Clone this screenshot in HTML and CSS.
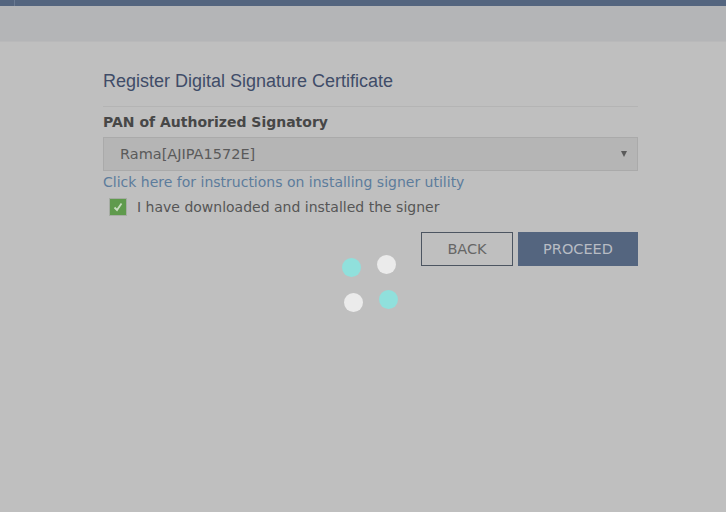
FILE: index.html
```html
<!DOCTYPE html>
<html lang="en">
<head>
    <meta charset="UTF-8">
    <title>Register Digital Signature Certificate</title>
    <link rel="stylesheet" href="styles.css">
</head>
<body>
    <div class="topbar"><span class="topbar-mark"></span></div>
    <div class="subbar"></div>

    <main class="content">
        <h3 class="page-title">Register Digital Signature Certificate</h3>
        <hr class="divider">

        <label class="field-label" for="pan">PAN of Authorized Signatory</label>
        <div class="select-box" id="pan">
            <span>Rama[AJIPA1572E]</span>
            <span class="caret"></span>
        </div>
        <a href="#" class="help-link">Click here for instructions on installing signer utility</a>

        <div class="check-row">
            <span class="checkbox">
                <svg width="12" height="12" viewBox="0 0 12 12"><path d="M2.5 6.5 L5 9 L9.5 2.5" fill="none" stroke="#c8dcc0" stroke-width="1.8"/></svg>
            </span>
            <span>I have downloaded and installed the signer</span>
        </div>

        <div class="actions">
            <button class="btn btn-outline">BACK</button>
            <button class="btn btn-primary">PROCEED</button>
        </div>
    </main>

    <!-- loading spinner over the page -->
    <div class="spinner">
        <span class="dot dot-teal d1"></span>
        <span class="dot dot-white d2"></span>
        <span class="dot dot-white d3"></span>
        <span class="dot dot-teal d4"></span>
    </div>
</body>
</html>
```

FILE: styles.css
```css
body {
    margin: 0;
    background: #bfbfbf;
    font-family: "DejaVu Sans", Verdana, sans-serif;
    color: #555;
    height: 512px;
    overflow: hidden;
    position: relative;
}

.topbar {
    height: 6px;
    background: #54657f;
    position: relative;
}

.topbar-mark {
    position: absolute;
    left: 14px;
    top: 0;
    width: 1px;
    height: 6px;
    background: #6a7a92;
}

.subbar {
    height: 35px;
    background: #b4b5b7;
    border-bottom: 1px solid #b9b9ba;
}

.content {
    width: 535px;
    margin-left: 103px;
    padding-top: 27px;
}

.page-title {
    margin: 0;
    font-family: "Liberation Sans", Arial, sans-serif;
    font-weight: normal;
    font-size: 18px;
    line-height: 24px;
    color: #404c68;
}

.divider {
    border: 0;
    border-top: 1px solid #b4b4b4;
    margin: 13px 0 6px;
}

.field-label {
    display: block;
    font-weight: bold;
    font-size: 14px;
    line-height: 18px;
    color: #474747;
    margin-bottom: 6px;
}

.select-box {
    height: 32px;
    background: #b5b5b5;
    border: 1px solid #aaaaaa;
    display: flex;
    align-items: center;
    justify-content: space-between;
    padding: 0 10px 0 16px;
    font-size: 14.5px;
    color: #5a5a5a;
}

.caret {
    width: 0;
    height: 0;
    border-left: 3px solid transparent;
    border-right: 3px solid transparent;
    border-top: 6px solid #5a5a5a;
}

.help-link {
    display: block;
    font-size: 14px;
    line-height: 20px;
    color: #5c7c9c;
    text-decoration: none;
    margin-top: 1px;
}

.check-row {
    display: flex;
    align-items: center;
    gap: 10px;
    margin: 4px 0 0 6px;
    font-size: 14px;
    color: #565656;
    height: 22px;
}

.checkbox {
    width: 16px;
    height: 16px;
    background: #5f9a4c;
    border: 1px solid #a6aca4;
    display: flex;
    align-items: center;
    justify-content: center;
}

.actions {
    display: flex;
    justify-content: flex-end;
    gap: 5px;
    margin-top: 14px;
}

.btn {
    height: 34px;
    font-family: "DejaVu Sans", Verdana, sans-serif;
    font-size: 14.5px;
    border-radius: 0;
    cursor: pointer;
}

.btn-outline {
    width: 92px;
    background: transparent;
    border: 1px solid #4c5561;
    color: #666;
}

.btn-primary {
    width: 120px;
    background: #54657f;
    border: 1px solid #54657f;
    color: #b8bcc4;
}

.spinner {
    position: absolute;
    left: 340px;
    top: 253px;
    width: 62px;
    height: 62px;
}

.dot {
    position: absolute;
    width: 19px;
    height: 19px;
    border-radius: 50%;
}

.dot-teal { background: #90e0dc; }
.dot-white { background: #ebebeb; }

.d1 { left: 2px; top: 5px; }
.d2 { left: 37px; top: 2px; }
.d3 { left: 4px; top: 40px; }
.d4 { left: 39px; top: 37px; }
```
